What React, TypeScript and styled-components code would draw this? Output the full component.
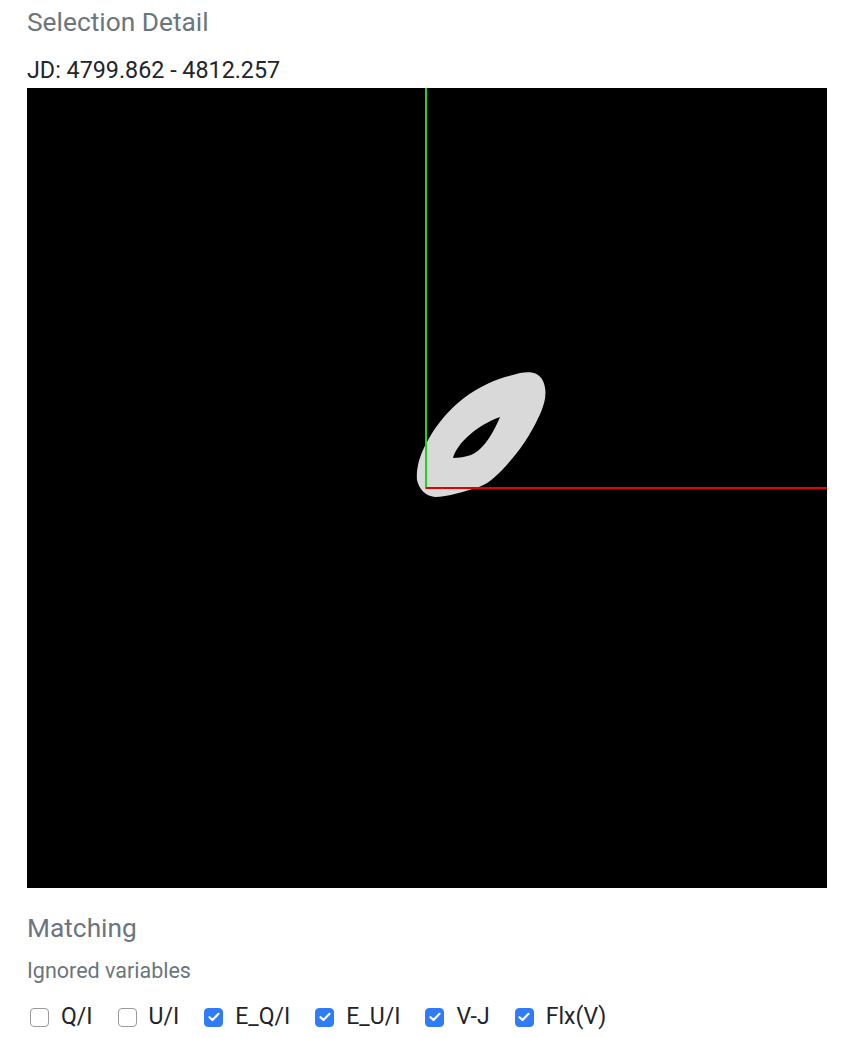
import React from "react";
import styled, { createGlobalStyle } from "styled-components";

const Global = createGlobalStyle`
  html, body { margin: 0; padding: 0; background: #fff; }
  body { font-family: Roboto, "Liberation Sans", Arial, sans-serif; }
`;

const Page = styled.div`
  padding: 6px 27px 0 27px;
  display: flex;
  flex-direction: column;
`;

const Heading = styled.h2<{ $top?: number }>`
  margin: ${(p) => p.$top ?? 0}px 0 0 0;
  font-size: 26.3px;
  line-height: 32px;
  font-weight: 400;
  color: #6c757d;
`;

const Range = styled.div`
  margin-top: 18px;
  font-size: 23.3px;
  line-height: 28px;
  color: #212529;
`;

const Canvas = styled.div`
  margin-top: 4px;
  width: 800px;
  height: 800px;
  background: #000;
  svg { display: block; }
`;

const SubLabel = styled.div`
  margin-top: 14px;
  font-size: 21.5px;
  line-height: 26px;
  color: #6c757d;
`;

const Options = styled.div`
  margin-top: 20px;
  display: flex;
  align-items: center;
  gap: 25px;
  padding-left: 3px;
`;

const Option = styled.label`
  display: flex;
  align-items: center;
  gap: 12px;
  font-size: 23px;
  line-height: 26px;
  color: #212529;
`;

const Box = styled.span<{ $on: boolean }>`
  width: 19px;
  height: 19px;
  box-sizing: border-box;
  border-radius: 4px;
  border: 1px solid ${(p) => (p.$on ? "#2f7cf6" : "#9a9a9a")};
  background: ${(p) => (p.$on ? "#2f7cf6" : "#fff")};
  display: flex;
  align-items: center;
  justify-content: center;
`;

const items: [string, boolean][] = [
  ["Q/I", false],
  ["U/I", false],
  ["E_Q/I", true],
  ["E_U/I", true],
  ["V-J", true],
  ["Flx(V)", true],
];

export default function App() {
  return (
    <>
      <Global />
      <Page>
        <Heading>Selection Detail</Heading>
        <Range>JD: 4799.862 - 4812.257</Range>
        <Canvas>
          <svg width="800" height="800" viewBox="0 0 800 800">
            <path
              fillRule="evenodd"
              fill="#d9d9d9"
              d="M493,285 C503,283 512,284 516,293 C520,302 519,312 514,324 C507,340 497,357 484,372 C473,385 463,395 452,399 C439,403 420,409 408,409 C398,408 392,401 390,392 C389,382 392,368 400,354 C408,339 418,326 432,314 C446,302 462,294 478,289 Z M426,370 C430,356 448,338 473,329 C467,343 458,361 444,367 C438,369 432,370 426,370 Z"
            />
            <rect x="398" y="0" width="2" height="401" fill="#1fd41f" />
            <rect x="399" y="399" width="401" height="2" fill="#e60000" />
          </svg>
        </Canvas>
        <Heading $top={24}>Matching</Heading>
        <SubLabel>Ignored variables</SubLabel>
        <Options>
          {items.map(([label, on]) => (
            <Option key={label}>
              <Box $on={on}>
                {on && (
                  <svg width="12" height="10" viewBox="0 0 12 10">
                    <path d="M1.5,5.2 L4.5,8 L10.5,1.8" fill="none" stroke="#fff" strokeWidth="2.2" strokeLinecap="round" strokeLinejoin="round" />
                  </svg>
                )}
              </Box>
              {label}
            </Option>
          ))}
        </Options>
      </Page>
    </>
  );
}
